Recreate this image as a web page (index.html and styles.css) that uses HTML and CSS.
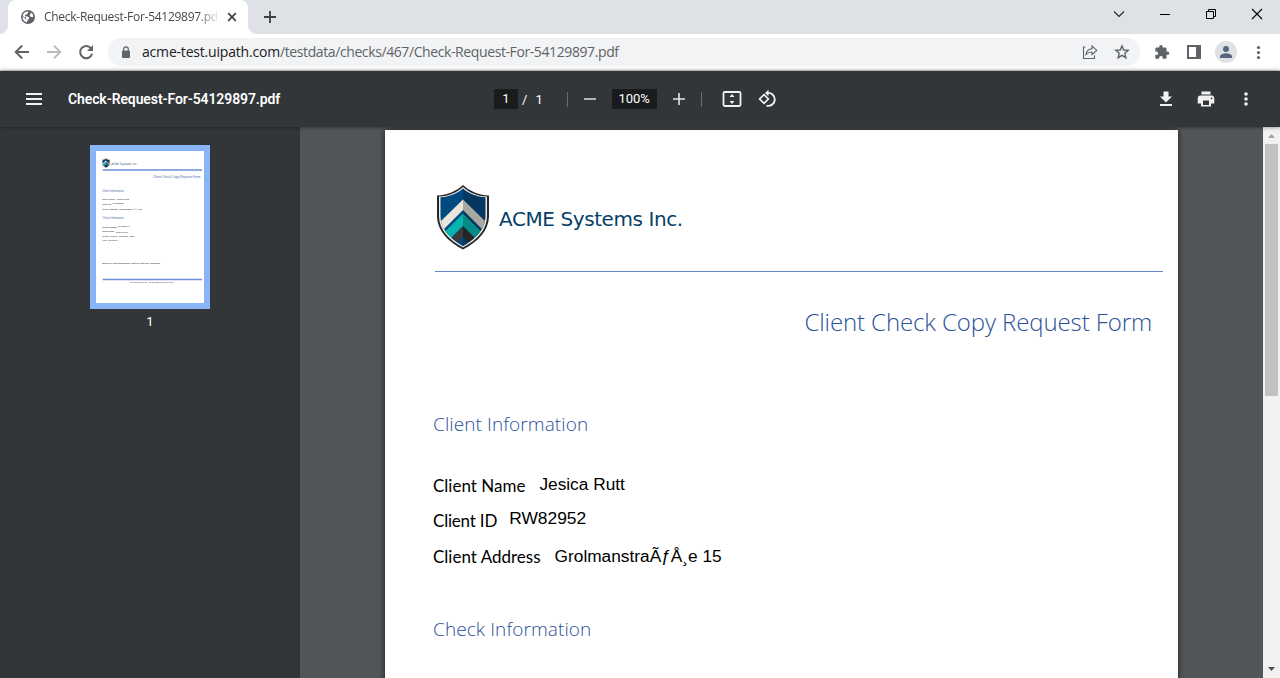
FILE: index.html
```html
<!DOCTYPE html>
<html lang="en">
<head>
<meta charset="utf-8">
<title>Check-Request-For-54129897.pdf</title>
<link rel="stylesheet" href="styles.css">
</head>
<body>
<div class="tabstrip">
  <div class="tab">
    <svg class="favicon" width="14" height="14" viewBox="0 0 14 14"><circle cx="7" cy="7" r="7" fill="#5f6368"/><path d="M7.500 1.400 6.800 3.200 5.600 4.400 4 5 4 6.200 6.400 6.600 8.200 7.600 8 9 6.800 9.700 6.400 11.200 5.400 12.200A5.500 5.500 0 0 1 1.500 7L3.600 7.800 4.600 9.400 5.400 8.600 4.400 7.200 1.600 6.200A5.500 5.500 0 0 1 7.500 1.400ZM9.600 2.200A5.500 5.500 0 0 1 12.500 6.600L11 7.200 9.200 6.400 8.600 5 9.800 4Z" fill="#fff"/></svg>
    <span class="tab-title">Check-Request-For-54129897.pdf</span>
    <svg class="tab-close" width="10" height="10" viewBox="0 0 10 10"><path d="M1.200 1.200 8.800 8.800M8.800 1.200 1.200 8.800" stroke="#3c4043" stroke-width="1.700"/></svg>
  </div>
  <svg class="new-tab" width="12" height="12" viewBox="0 0 12 12"><path d="M6 0V12M0 6H12" stroke="#3c4043" stroke-width="1.800"/></svg>
  <div class="window-controls">
    <svg width="46" height="28" viewBox="0 0 46 28"><path d="M18 11.500 23 16.500 28 11.500" fill="none" stroke="#222" stroke-width="1.100"/></svg>
    <svg width="46" height="28" viewBox="0 0 46 28"><path d="M18 14.500H28" stroke="#000"/></svg>
    <svg width="46" height="28" viewBox="0 0 46 28"><path d="M18.500 11.500H25.500V18.500H18.500ZM20.500 11V9.500H27.500V16.500H26" fill="none" stroke="#000"/></svg>
    <svg width="46" height="28" viewBox="0 0 46 28"><path d="M18 9 28 19M28 9 18 19" stroke="#000" stroke-width="1.100"/></svg>
  </div>
</div>
<div class="navbar">
  <div class="nav-buttons">
    <svg width="32" height="32" viewBox="0 0 32 32"><path d="M23 16H10M16.200 9.500 9.700 16 16.200 22.500" fill="none" stroke="#5f6368" stroke-width="1.900"/></svg>
    <svg width="32" height="32" viewBox="0 0 32 32"><path d="M9 16H22M15.800 9.500 22.300 16 15.800 22.500" fill="none" stroke="#babcbe" stroke-width="1.900"/></svg>
    <svg width="32" height="32" viewBox="0 0 32 32"><path d="M21 12.300A6.100 6.100 0 1 0 22.100 17.800" fill="none" stroke="#5f6368" stroke-width="2"/><path d="M23 9V15H17Z" fill="#5f6368"/></svg>
  </div>
  <div class="omnibox">
    <svg class="lock" width="10" height="13" viewBox="0 0 10 13"><rect x="1" y="4.500" width="8" height="7.500" rx="1" fill="#5f6368"/><path d="M2.700 5V3.200A2.300 2.300 0 0 1 7.300 3.200V5" fill="none" stroke="#5f6368" stroke-width="1.200"/></svg>
    <span class="url"><span class="host">acme-test.uipath.com</span>/testdata/checks/467/Check-Request-For-54129897.pdf</span>
    <svg class="share" width="16" height="16" viewBox="0 0 16 16"><path d="M3.500 3H1.500V14.500H12.500V11.500M4 10.500C4.500 7 6.500 5 10 4.800V2L14.800 6.400 10 10.600V8C7.500 8 5.500 8.800 4 10.500Z" fill="none" stroke="#5f6368" stroke-width="1.100"/></svg>
    <svg class="star" width="16" height="16" viewBox="0 0 16 16"><path d="M8 1.900 9.700 6 14.200 6.400 10.800 9.300 11.800 13.700 8 11.400 4.200 13.700 5.200 9.300 1.800 6.400 6.300 6Z" fill="none" stroke="#5f6368" stroke-width="1.400"/></svg>
  </div>
  <div class="extensions">
    <svg width="32" height="32" viewBox="0 0 32 32"><path transform="translate(8 8.300) scale(.66)" d="M20.500 11H19V7c0-1.100-.9-2-2-2h-4V3.500C13 2.120 11.880 1 10.500 1S8 2.120 8 3.500V5H4c-1.100 0-1.990.9-1.990 2v3.800H3.500c1.490 0 2.700 1.210 2.700 2.700s-1.210 2.700-2.700 2.700H2V20c0 1.100.9 2 2 2h3.800v-1.500c0-1.490 1.210-2.700 2.700-2.700 1.490 0 2.700 1.210 2.700 2.700V22H17c1.100 0 2-.9 2-2v-4h1.500c1.380 0 2.500-1.120 2.500-2.500S21.880 11 20.500 11z" fill="#5f6368"/></svg>
    <svg width="32" height="32" viewBox="0 0 32 32"><path fill-rule="evenodd" d="M9 9H23V23H9ZM11 11V21H18V11Z" fill="#5f6368"/></svg>
    <svg width="32" height="32" viewBox="0 0 32 32"><circle cx="16" cy="16" r="11" fill="#dee1e6"/><circle cx="16" cy="13" r="3" fill="#56657d"/><path d="M10 22V20.300C10 18.200 14 17.200 16 17.200S22 18.200 22 20.300V22Z" fill="#56657d"/></svg>
    <svg width="32" height="32" viewBox="0 0 32 32"><g fill="#5f6368"><circle cx="16.500" cy="11.500" r="1.600"/><circle cx="16.500" cy="16.500" r="1.600"/><circle cx="16.500" cy="21.500" r="1.600"/></g></svg>
  </div>
</div>
<div class="pdf-toolbar">
  <div class="toolbar-start">
    <svg width="16" height="12" viewBox="0 0 16 12"><path d="M0 1H16M0 6H16M0 11H16" stroke="#f1f1f1" stroke-width="2"/></svg>
    <span class="file-name">Check-Request-For-54129897.pdf</span>
  </div>
  <div class="toolbar-center">
    <span class="page-box">1</span><span class="slash">/</span><span class="page-total">1</span>
    <i class="divider"></i>
    <svg class="zoom-out" width="12" height="12" viewBox="0 0 12 12"><path d="M0 6H12" stroke="#d5d6d6" stroke-width="1.600"/></svg>
    <span class="zoom-box">100%</span>
    <svg class="zoom-in" width="12" height="12" viewBox="0 0 12 12"><path d="M0 6H12M6 0V12" stroke="#e5e5e6" stroke-width="1.600"/></svg>
    <i class="divider"></i>
    <svg class="fit" width="20" height="16" viewBox="0 0 20 16"><rect x="1.500" y="1" width="17" height="14" rx="1.200" fill="none" stroke="#f1f1f1" stroke-width="1.800"/><path d="M10 3 12.500 6H7.500ZM10 13 12.500 10H7.500Z" fill="#f1f1f1"/></svg>
    <svg class="rotate" width="20" height="20" viewBox="0 0 20 20"><path d="M6 5.600 10.400 10 6 14.400 1.600 10Z" fill="none" stroke="#f1f1f1" stroke-width="1.700"/><path d="M9 4A6.500 6.500 0 1 1 8.500 16.600" fill="none" stroke="#f1f1f1" stroke-width="1.900"/><path d="M10.500.800V7.200L7 4Z" fill="#f1f1f1"/></svg>
  </div>
  <div class="toolbar-end">
    <svg width="40" height="32" viewBox="0 0 40 32"><path d="M17.500 8.500H22.500V13.500H26L20 19.500 14 13.500H17.500ZM14 21H26V23H14Z" fill="#f1f1f1"/></svg>
    <svg width="40" height="32" viewBox="0 0 40 32"><path fill-rule="evenodd" d="M15.500 8.500H24.500V11.500H15.500ZM14.500 12.500H25.500A3 3 0 0 1 28.300 15.400V20.500H25V23.500H15V20.500H11.700V15.400A3 3 0 0 1 14.500 12.500ZM17 17.500V22H23V17.500Z" fill="#f1f1f1"/><circle cx="25.600" cy="15.300" r=".9" fill="#323639"/></svg>
    <svg width="40" height="32" viewBox="0 0 40 32"><g fill="#f1f1f1"><circle cx="20" cy="11" r="1.800"/><circle cx="20" cy="16" r="1.800"/><circle cx="20" cy="21" r="1.800"/></g></svg>
  </div>
</div>
<div class="workspace">
  <div class="sidebar">
    <svg class="thumbnail" width="108" height="152" viewBox="0 0 108 152">
      <rect width="108" height="152" fill="#fff"/>
      <use href="#shield" x="6" y="7" width="8" height="10"/>
      <path d="M6.700 19H106M6.700 128.500H106" stroke="#6b8fd9" stroke-width="1.300"/>
      <g class="thumb-text">
        <text x="15.300" y="13.600" textLength="26" lengthAdjust="spacingAndGlyphs" class="thumb-brand">ACME Systems Inc.</text>
        <g class="thumb-heading">
          <text x="57" y="27" textLength="47.500" lengthAdjust="spacingAndGlyphs" class="thumb-title">Client Check Copy Request Form</text>
          <text x="6.300" y="41.200" textLength="21.500" lengthAdjust="spacingAndGlyphs">Client Information</text>
          <text x="6.300" y="68.200" textLength="21.500" lengthAdjust="spacingAndGlyphs">Check Information</text>
        </g>
        <text x="6.300" y="49" textLength="13">Client Name</text><text x="21" y="49" textLength="12">Jesica Rutt</text>
        <text x="6.300" y="54" textLength="9">Client ID</text><text x="16.500" y="53.300" textLength="11">RW82952</text>
        <text x="6.300" y="59" textLength="15">Client Address</text><text x="23" y="59" textLength="23">GrolmanstraÃƒÅ¸e 15</text>
        <text x="6.300" y="77" textLength="15">Check Number</text><text x="22.500" y="76" textLength="11">54129897</text>
        <text x="6.300" y="81.300" textLength="12">Check Date</text><text x="20" y="82" textLength="12">2017-11-08</text>
        <text x="6.300" y="86" textLength="15">Check Amount</text><text x="23" y="86" textLength="16">278230 SEK</text>
        <text x="6.300" y="90" textLength="16">(incl. currency)</text>
        <text x="6.300" y="113" textLength="57.500">Employee who handled the request: John Doe, 3/2/2018</text>
        <text x="34" y="132" textLength="43" class="thumb-foot">For internal use only - do not distribute to the client</text>
      </g>
    </svg>
    <span class="thumb-number">1</span>
  </div>
  <div class="viewer">
    <div class="page">
      <div class="letterhead">
        <svg width="54" height="66" viewBox="0 0 54 66">
          <defs>
            <symbol id="shield" viewBox="0 0 54 66">
              <clipPath id="inner"><path d="M27 4.500C22 9 13 13 4.500 13.200V33C5 45 14 54.500 27 62.200 40 54.500 49 45 49.500 33V13.200C41 13 32 9 27 4.500Z"/></clipPath>
              <path d="M27 1C21 6.500 12 11 1 11.500V33C1.500 47 12 57.500 27 65.500 42 57.500 52.500 47 53 33V11.500C42 11 33 6.500 27 1Z" fill="#272727"/>
              <path d="M27 3C21.500 8 13 12.300 3 12.500V33C3.500 46 13 56 27 63.500 41 56 50.500 46 51 33V12.500C41 12.300 32.500 8 27 3Z" fill="#e8e8e8"/>
              <g clip-path="url(#inner)">
                <path d="M0 0H27V66H0Z" fill="#02497f"/><path d="M27 0H54V66H27Z" fill="#063760"/>
                <path d="M27 15.500V26L0 53V42Z" fill="#e9e7dc"/><path d="M27 15.500V26L54 53V42Z" fill="#a9a9a2"/>
                <path d="M27 29.500V42L0 69V56.500Z" fill="#06b3ad"/><path d="M27 29.500V42L54 69V56.500Z" fill="#078b86"/>
                <path d="M27 42.500V52.500L13 66.500V56.500Z" fill="#3a3a3a"/><path d="M27 42.500V52.500L41 66.500V56.500Z" fill="#252525"/>
              </g>
            </symbol>
          </defs>
          <use href="#shield" width="54" height="66"/>
        </svg>
        <span class="brand">ACME Systems Inc.</span>
      </div>
      <h1>Client Check Copy Request Form</h1>
      <h2>Client Information</h2>
      <dl>
        <div class="field name"><dt>Client Name</dt><dd>Jesica Rutt</dd></div>
        <div class="field id"><dt>Client ID</dt><dd>RW82952</dd></div>
        <div class="field address"><dt>Client Address</dt><dd>GrolmanstraÃƒÅ¸e 15</dd></div>
      </dl>
      <h2 class="check-heading">Check Information</h2>
    </div>
  </div>
  <div class="scrollbar">
    <svg width="17" height="17" viewBox="0 0 17 17"><path d="M5 11 8.500 7 12 11Z" fill="#a3a3a3"/></svg>
    <div class="scroll-thumb"></div>
    <svg class="scroll-down" width="17" height="17" viewBox="0 0 17 17"><path d="M5 6 8.500 10 12 6Z" fill="#505050"/></svg>
  </div>
</div>
</body>
</html>
```
FILE: styles.css
```css
* { box-sizing: border-box; }
body { margin: 0; width: 1280px; height: 678px; overflow: hidden; display: flex; flex-direction: column; font-family: "Open Sans", sans-serif; }
svg { display: block; flex: none; }
span, h1, h2, dt, dd { white-space: nowrap; }
.tabstrip { height: 34px; flex: none; background: #dee1e6; display: flex; padding-left: 8px; }
.tab { width: 240px; height: 34px; background: #fff; border-radius: 8px 8px 0 0; display: flex; align-items: center; padding-left: 13px; position: relative; }
.tab::before, .tab::after { content: ""; position: absolute; bottom: 0; width: 8px; height: 8px; }
.tab::before { left: -8px; background: radial-gradient(circle at 0 0, transparent 7.5px, #fff 8px); }
.tab::after { right: -8px; background: radial-gradient(circle at 100% 0, transparent 7.5px, #fff 8px); }
.tab-title { width: 174px; margin-left: 9px; overflow: hidden; font-size: 12px; line-height: 18px; letter-spacing: -.28px; color: #45494d; -webkit-mask-image: linear-gradient(90deg, #000 154px, transparent 176px); mask-image: linear-gradient(90deg, #000 154px, transparent 176px); }
.tab-close { margin-left: 9px; }
.new-tab { margin: 11px 0 0 16px; }
.window-controls { display: flex; margin-left: auto; }
.navbar { height: 37px; flex: none; background: #fff; border-bottom: 1px solid #dfe2e2; display: flex; align-items: center; }
.nav-buttons { display: flex; padding-left: 6px; width: 108px; }
.omnibox { width: 1032px; height: 28px; border-radius: 14px; background: #f1f3f4; display: flex; align-items: center; padding-left: 13px; }
.url { margin-left: 11px; font-size: 14px; line-height: 20px; color: #5f6368; letter-spacing: -.34px; }
.host { color: #202124; letter-spacing: -.19px; }
.url { letter-spacing: -.4px; }
.share { margin-left: auto; }
.star { margin: 0 10px 0 16px; }
.extensions { display: flex; margin-left: 6px; }
.pdf-toolbar { height: 56px; flex: none; background: #323639; color: #f1f1f1; font-family: Roboto, sans-serif; display: flex; align-items: center; position: relative; z-index: 1; box-shadow: 0 0 4px rgba(0,0,0,.5); }
.toolbar-start { display: flex; align-items: center; padding-left: 26px; width: 494px; }
.file-name { margin-left: 26px; font-size: 14px; font-weight: 600; letter-spacing: -.11px; color: #fff; }
.toolbar-center { display: flex; align-items: center; font-size: 13px; color: #fff; }
.page-box, .zoom-box { background: #191b1c; height: 20px; line-height: 20px; text-align: center; }
.page-box { width: 24px; }
.slash { margin-left: 4px; }
.page-total { margin-left: 8px; }
.divider { width: 1px; height: 15px; background: #686b6d; margin-left: 24px; }
.zoom-out { margin-left: 16px; }
.zoom-box { width: 45px; margin-left: 16px; }
.zoom-in { margin-left: 16px; }
.zoom-in + .divider { margin-left: 16px; }
.fit { margin-left: 20px; }
.rotate { margin-left: 16px; }
.toolbar-end { display: flex; margin-left: auto; padding-right: 14px; }
.workspace { flex: 1; min-height: 0; display: flex; background: #525659; }
.sidebar { width: 300px; flex: none; background: #323639; display: flex; flex-direction: column; align-items: center; padding-top: 18px; }
.thumbnail { border: 6px solid #8ab4f8; box-sizing: content-box; }
.thumb-number { font: 13px/16px Roboto, sans-serif; color: #fff; margin-top: 5px; }
.thumb-text { font: 2.4px "Liberation Sans", sans-serif; fill: #111; }
.thumb-brand { font: 3.2px "DejaVu Sans", sans-serif; fill: #1c4d73; }
.thumb-heading { font-size: 2.6px; fill: #4c6cad; }
.thumb-title { font-size: 3.3px; }
.thumb-foot { font-size: 1.8px; }
.viewer { width: 963px; flex: none; padding: 3px 0 0 85px; overflow: hidden; }
.page { width: 793px; height: 1122px; background: #fff; padding: 54px 15px 0 48px; box-shadow: 0 0 6px rgba(0,0,0,.65); }
.letterhead { display: flex; align-items: center; height: 88px; padding: 0 0 22px 3px; margin-left: 2px; border-bottom: 1px solid #6287c9; }
.letterhead svg { margin-left: -2px; }
.brand { font: 20px "DejaVu Sans", sans-serif; letter-spacing: -.42px; color: #073f68; margin-left: 9px; padding-top: 4px; }
h1, h2 { font-family: "Open Sans", sans-serif; font-weight: 300; color: #2a5099; margin: 0; }
h1 { font-size: 24px; line-height: 32px; margin-top: 34px; margin-right: 11px; text-align: right; letter-spacing: -.1px; }
h2 { font-size: 19px; line-height: 26px; margin-top: 73px; letter-spacing: .1px; }
dl { margin: 31px 0 0; }
.field { display: flex; color: #000; height: 35px; }
dt { font: 17px/36px Lato, sans-serif; }
dd { margin: 0 0 0 14px; font: 17.3px/33px "Liberation Sans", sans-serif; }
.id dt { letter-spacing: -.2px; }
.id dd { margin-left: 12px; line-height: 31px; font-size: 17.4px; }
.address { margin-top: 1px; }
.address dd { line-height: 35px; }
.check-heading { margin-top: 42px; }
.scrollbar { width: 17px; flex: none; background: #f1f1f1; display: flex; flex-direction: column; }
.scroll-thumb { width: 13px; height: 252px; margin-left: 2px; background: #c1c1c1; }
.scroll-down { margin-top: auto; }
```
